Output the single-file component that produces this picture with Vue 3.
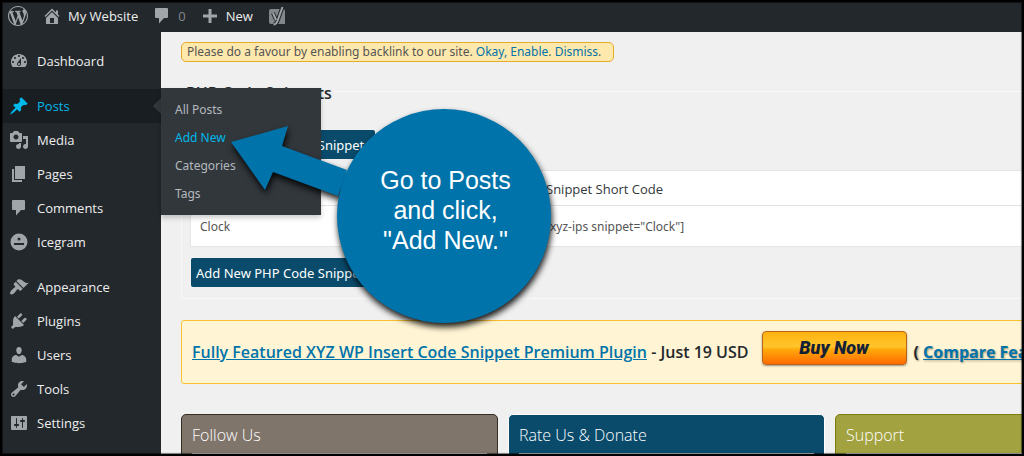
<script setup>
const paths = {
  wordpress: 'M20 10c0-5.51-4.49-10-10-10C4.48 0 0 4.49 0 10c0 5.52 4.48 10 10 10 5.51 0 10-4.48 10-10zM7.78 15.37L4.37 6.22c.55-.02 1.17-.08 1.17-.08.5-.06.44-1.13-.06-1.11 0 0-1.45.11-2.37.11-.18 0-.37 0-.58-.01C4.12 2.69 6.87 1.11 10 1.11c2.33 0 4.45.87 6.05 2.34-.68-.11-1.65.39-1.65 1.58 0 .74.45 1.36.9 2.1.35.61.55 1.36.55 2.46 0 1.49-1.4 5-1.4 5l-3.03-8.37c.54-.02.82-.17.82-.17.5-.05.44-1.25-.06-1.22 0 0-1.44.12-2.38.12-.87 0-2.33-.12-2.33-.12-.5-.03-.56 1.2-.06 1.22l.92.08 1.26 3.41zM17.41 10c.24-.64.74-1.87.43-4.25.7 1.29 1.05 2.71 1.05 4.25 0 3.29-1.73 6.24-4.4 7.78.97-2.59 1.94-5.2 2.92-7.78zM6.1 18.09C3.12 16.65 1.11 13.53 1.11 10c0-1.3.23-2.48.72-3.59C3.25 10.3 4.67 14.2 6.1 18.09zm4.03-6.63l2.58 6.98c-.86.29-1.76.45-2.71.45-.79 0-1.57-.11-2.29-.33.81-2.38 1.62-4.74 2.42-7.1z',
  home: 'M16 8.5l1.53 1.53-1.06 1.06L10 4.6l-6.47 6.49-1.06-1.06L10 2.5l4 4v-2h2v4zm-6-2.46l6 5.99V18H4v-5.97zM12 17v-5H8v5h4z',
  comments: 'M4 2h11q1 0 1 1v8q0 1-1 1h-3l-5 5.500V12H4q-1 0-1-1V3q0-1 1-1z',
  plus: 'M17 8.500v3h-5.500V17h-3v-5.500H3v-3h5.500V3h3v5.500z',
  dashboard: 'M3.76 16h12.48c1.1-1.37 1.76-3.11 1.76-5 0-4.42-3.58-8-8-8s-8 3.58-8 8c0 1.89.66 3.63 1.76 5zM10 4c.55 0 1 .45 1 1s-.45 1-1 1-1-.45-1-1 .45-1 1-1zM6 6c.55 0 1 .45 1 1s-.45 1-1 1-1-.45-1-1 .45-1 1-1zm8 0c.55 0 1 .45 1 1s-.45 1-1 1-1-.45-1-1 .45-1 1-1zm-5.37 5.55L12 7v6c0 1.1-.9 2-2 2s-2-.9-2-2c0-.57.24-1.08.63-1.45zM4 10c.55 0 1 .45 1 1s-.45 1-1 1-1-.45-1-1 .45-1 1-1zm12 0c.55 0 1 .45 1 1s-.45 1-1 1-1-.45-1-1 .45-1 1-1zm-5 3c0-.55-.45-1-1-1s-1 .45-1 1 .45 1 1 1 1-.45 1-1z',
  post: 'M10.44 3.02l1.82-1.82 6.36 6.35-1.83 1.82c-1.05-.68-2.48-.57-3.41.36l-.75.75c-.92.93-1.04 2.35-.35 3.41l-1.83 1.82-2.41-2.41-2.8 2.79c-.42.42-3.38 2.71-3.8 2.29s1.86-3.39 2.28-3.81l2.79-2.79L4.1 9.36l1.83-1.82c1.05.69 2.48.57 3.4-.36l.75-.75c.93-.92 1.05-2.35.36-3.41z',
  media: 'M13 11V4c0-.55-.45-1-1-1h-1.67L9 1H5L3.67 3H2c-.55 0-1 .45-1 1v7c0 .55.45 1 1 1h10c.55 0 1-.45 1-1zM7 4.5c1.38 0 2.5 1.12 2.5 2.5S8.38 9.5 7 9.5 4.5 8.38 4.5 7 5.62 4.5 7 4.5zM14 6h5v10.5c0 1.38-1.12 2.5-2.5 2.5S14 17.88 14 16.5s1.12-2.5 2.5-2.5c.17 0 .34.02.5.05V9h-3V6zm-4 8.05V13h2v3.5c0 1.38-1.12 2.5-2.5 2.5S7 17.88 7 16.5 8.12 14 9.5 14c.17 0 .34.02.5.05z',
  page: 'M6 15V2h10v13H6zm-1 1h8v2H3V5h2v11z',
  icegram: 'M10 1.500a8.500 8.500 0 1 0 0 17 8.500 8.500 0 0 0 0-17zM10 5.500a1.500 1.500 0 1 1 0 3 1.500 1.500 0 0 1 0-3zM5 11h10v2H5z',
  appearance: 'M14.48 11.06L7.41 3.99l1.5-1.5c.5-.56 2.3-.47 3.51.32 1.21.8 1.43 1.28 2.91 2.1 1.18.64 2.45 1.26 4.45.85zm-.71.71L6.7 4.7 4.93 6.47c-.39.39-.39 1.02 0 1.41l1.06 1.06c.39.39.39 1.03 0 1.42-.6.6-1.43 1.11-2.21 1.69-.35.26-.7.53-1.01.84C1.43 14.23.4 16.08 1.4 17.07c.99 1 2.84-.03 4.18-1.36.31-.31.58-.66.85-1.02.57-.78 1.08-1.61 1.69-2.21.39-.39 1.02-.39 1.41 0l1.06 1.06c.39.39 1.02.39 1.41 0z',
  plugins: 'M13.11 4.36L9.87 7.6 8 5.73l3.24-3.24c.35-.34 1.05-.2 1.56.32.52.51.66 1.21.31 1.55zm-8 1.77l.91-1.12 9.01 9.01-1.19.84c-.71.71-2.63 1.16-3.82 1.16H6.14L4.9 17.26c-.59.59-1.54.59-2.12 0-.59-.58-.59-1.53 0-2.12l1.24-1.24v-3.88c0-1.13.4-3.19 1.09-3.89zm7.26 3.97l3.24-3.24c.34-.35 1.04-.21 1.55.31.52.51.66 1.21.31 1.55l-3.24 3.25z',
  users: 'M10 9.25c-2.27 0-2.73-3.44-2.73-3.44C7 4.02 7.82 2 9.97 2c2.16 0 2.98 2.02 2.71 3.81 0 0-.41 3.44-2.68 3.44zm0 2.57L12.72 10c2.39 0 4.52 2.33 4.52 4.53v2.49s-3.65 1.13-7.24 1.13c-3.65 0-7.24-1.13-7.24-1.13v-2.49c0-2.25 1.94-4.48 4.47-4.48z',
  tools: 'M16.68 9.77c-1.34 1.34-3.3 1.67-4.95.99l-5.41 6.52c-.99.99-2.59.99-3.58 0s-.99-2.59 0-3.57l6.52-5.42c-.68-1.65-.35-3.61.99-4.95 1.28-1.28 3.12-1.62 4.72-1.06l-2.89 2.89 2.82 2.82 2.86-2.87c.53 1.58.18 3.39-1.08 4.65zM3.81 16.21c.4.39 1.04.39 1.43 0 .4-.4.4-1.04 0-1.43-.39-.4-1.03-.4-1.43 0-.39.39-.39 1.03 0 1.43z',
  settings: 'M18 16V4c0-.55-.45-1-1-1H3c-.55 0-1 .45-1 1v12c0 .55.45 1 1 1h14c.55 0 1-.45 1-1zM8 11h1c.55 0 1 .45 1 1s-.45 1-1 1H8v1.5c0 .28-.22.5-.5.5s-.5-.22-.5-.5V13H6c-.55 0-1-.45-1-1s.45-1 1-1h1V5.5c0-.28.22-.5.5-.5s.5.22.5.5V11zm5-2h-1c-.55 0-1-.45-1-1s.45-1 1-1h1V5.5c0-.28.22-.5.5-.5s.5.22.5.5V7h1c.55 0 1 .45 1 1s-.45 1-1 1h-1v5.5c0 .28-.22.5-.5.5s-.5-.22-.5-.5V9z',
}

const menu = [
  { label: 'Dashboard', icon: 'dashboard' },
  { label: 'Posts', icon: 'post', gap: true, children: ['All Posts', 'Add New', 'Categories', 'Tags'] },
  { label: 'Media', icon: 'media' },
  { label: 'Pages', icon: 'page' },
  { label: 'Comments', icon: 'comments' },
  { label: 'Icegram', icon: 'icegram' },
  { label: 'Appearance', icon: 'appearance', gap: true },
  { label: 'Plugins', icon: 'plugins' },
  { label: 'Users', icon: 'users' },
  { label: 'Tools', icon: 'tools' },
  { label: 'Settings', icon: 'settings' },
]

const cards = [
  { title: 'Follow Us', tone: 'brown' },
  { title: 'Rate Us & Donate', tone: 'blue' },
  { title: 'Support', tone: 'olive' },
]
</script>

<template>
  <div class="page">
    <header class="bar">
      <a href="#" class="bar-item logo" aria-label="WordPress">
        <svg class="icon" viewBox="0 0 20 20"><path :d="paths.wordpress" /></svg>
      </a>
      <a href="#" class="bar-item">
        <svg class="icon" viewBox="0 0 20 20"><path :d="paths.home" /></svg>My Website
      </a>
      <a href="#" class="bar-item muted">
        <svg class="icon" viewBox="0 0 20 20"><path :d="paths.comments" /></svg>0
      </a>
      <a href="#" class="bar-item">
        <svg class="icon" viewBox="0 0 20 20"><path :d="paths.plus" /></svg>New
      </a>
      <a href="#" class="bar-item" aria-label="SEO">
        <svg class="icon" viewBox="0 0 20 20">
          <path class="seo-tile" d="M4 3h12a2 2 0 0 1 2 2v13H4a2 2 0 0 1-2-2V5a2 2 0 0 1 2-2z" />
          <path class="seo-edge" d="M6 7l3 7M15.500 1l-5 14q-1.200 3.500-4 3.500" />
          <path class="seo-mark" d="M6 7l3 7M15.500 1l-5 14q-1.200 3.500-4 3.500" />
        </svg>
      </a>
    </header>

    <div class="body">
      <nav class="side">
        <ul class="menu">
          <li
            v-for="item in menu"
            :key="item.label"
            class="menu-item"
            :class="{ gap: item.gap, open: item.children }"
          >
            <a href="#" class="menu-link">
              <svg class="icon" viewBox="0 0 20 20"><path fill-rule="evenodd" :d="paths[item.icon]" /></svg>
              {{ item.label }}
            </a>
            <ul v-if="item.children" class="submenu">
              <li v-for="child in item.children" :key="child">
                <a href="#" class="sub-link" :class="{ active: child === 'Add New' }">{{ child }}</a>
              </li>
            </ul>
          </li>
        </ul>
      </nav>

      <main class="content">
        <p class="notice">
          Please do a favour by enabling backlink to our site. <a href="#">Okay, Enable</a>. <a href="#">Dismiss</a>.
        </p>

        <fieldset class="snippets">
          <legend>PHP Code Snippets</legend>
          <button type="button" class="add">Add New PHP Code Snippet</button>
          <table class="list">
            <thead>
              <tr><th class="name">Name</th><th>Snippet Short Code</th></tr>
            </thead>
            <tbody>
              <tr><td>Clock</td><td>[xyz-ips snippet="Clock"]</td></tr>
            </tbody>
          </table>
          <button type="button" class="add">Add New PHP Code Snippet</button>
        </fieldset>

        <section class="promo">
          <span><a href="#">Fully Featured XYZ WP Insert Code Snippet Premium Plugin</a> - Just 19 USD</span>
          <button type="button" class="buy">Buy Now</button>
          <span class="compare">( <a href="#">Compare Features</a> )</span>
        </section>

        <div class="cards">
          <section v-for="card in cards" :key="card.title" class="card" :class="card.tone">
            <h2>{{ card.title }}</h2>
          </section>
        </div>
      </main>
    </div>

    <div class="callout">
      <svg class="callout-shape" viewBox="0 0 340 220">
        <path d="M11 34L68 18L62 38L127 62L118 88L53 64L45 82Z" />
        <circle cx="224" cy="108" r="107" />
      </svg>
      <p class="callout-text">Go to Posts<br />and click,<br />"Add New."</p>
    </div>
    <div class="frame"></div>
  </div>
</template>

<style>
body {
  margin: 0;
  background: #f0f0f0;
}
</style>

<style scoped>
.page {
  position: relative;
  display: flex;
  flex-direction: column;
  height: 100vh;
  overflow: hidden;
  background: #f0f0f0;
  color: #444;
  font: 13px/20px "Open Sans", "Noto Sans", sans-serif;
}
a { color: #0073aa; }
ul { list-style: none; margin: 0; padding: 0; }
.icon { flex: none; width: 20px; height: 20px; fill: #a0a5aa; }

.bar {
  flex: none;
  display: flex;
  align-items: center;
  gap: 14px;
  height: 32px;
  padding-left: 8px;
  background: #23282d;
}
.bar-item {
  display: flex;
  align-items: center;
  gap: 6px;
  color: #eee;
  text-decoration: none;
}
.muted { color: #83878b; }
.seo-tile { fill: #82878c; }
.seo-edge { fill: none; stroke: #23282d; stroke-width: 4; }
.seo-mark { fill: none; stroke: #a0a5aa; stroke-width: 2; }

.body { flex: 1; display: flex; min-height: 0; }
.side { flex: none; width: 161px; padding-top: 12px; box-sizing: border-box; background: #23282d; }
.menu-item { position: relative; }
.gap { margin-top: 11px; }
.menu-link {
  display: flex;
  align-items: center;
  gap: 8px;
  height: 34px;
  padding-left: 9px;
  color: #eee;
  text-decoration: none;
}
.open > .menu-link { background: #191e23; color: #00b9eb; }
.open > .menu-link .icon { fill: #00b9eb; }
.open > .menu-link::after {
  content: "";
  position: absolute;
  right: 0;
  top: 9px;
  border: 8px solid transparent;
  border-left: 0;
  border-right-color: #32373c;
}
.submenu {
  position: absolute;
  z-index: 2;
  top: -1px;
  left: 100%;
  width: 160px;
  padding: 8px 0 7px;
  box-sizing: border-box;
  background: #32373c;
  box-shadow: 0 3px 5px rgba(0, 0, 0, 0.2);
}
.sub-link {
  display: block;
  padding: 4px 14px;
  color: #b4b9be;
  font-family: "Noto Sans", sans-serif;
  font-size: 12px;
  text-decoration: none;
}
.sub-link.active { color: #00b9eb; }

.content { flex: 1; min-width: 0; margin-right: -128px; padding: 10px 0 0 20px; }
.notice {
  width: fit-content;
  margin: 0;
  padding: 0 12px 0 5px;
  border: 1px solid #e3ab27;
  border-radius: 5px;
  background: #ffe8ac;
  font-family: "Noto Sans", sans-serif;
  font-size: 12px;
  line-height: 18px;
  color: #555;
}
.notice a { text-decoration: none; }
.snippets {
  margin: 18px 0 0;
  padding: 27px 8px 11px;
  border: 1px solid #f8f8f8;
}
legend { margin-left: -6px; padding: 3px 2px 0; font-size: 16px; font-weight: 600; color: #23282d; }
.add {
  display: block;
  min-width: 184px;
  height: 29px;
  margin-left: 1px;
  padding: 0 5px;
  border: 0;
  border-radius: 2px;
  background: #0a4b6b;
  color: #fff;
  font: 13px/20px "Noto Sans", sans-serif;
  text-align: left;
}
.list {
  width: 100%;
  margin: 11px 0;
  border: 1px solid #e5e5e5;
  border-spacing: 0;
  background: #fff;
  color: #555;
}
.list th { padding: 8px 9px 6px; border-bottom: 1px solid #e1e1e1; font-weight: 400; text-align: left; color: #32373c; }
.list td { padding: 11px 9px 9px; font-family: "Noto Sans", sans-serif; font-size: 12px; }
.name { width: 328px; }

.promo {
  display: flex;
  align-items: center;
  gap: 7px;
  height: 62px;
  margin-top: 21px;
  padding-left: 10px;
  border: 1px solid #fcc22d;
  border-radius: 3px;
  background: #fff4d3;
  color: #23282d;
  font-size: 16px;
  font-weight: 600;
  white-space: nowrap;
}
.buy {
  width: 145px;
  height: 34px;
  margin: 0 0 8px 6px;
  padding: 0;
  border: 1px solid #b8641c;
  border-radius: 4px;
  background: linear-gradient(#ffb20f, #ffc52d 45%, #ffa90a 55%, #ff6a00);
  box-shadow: 0 1px 2px rgba(0, 0, 0, 0.4);
  color: #142036;
  font: italic 900 18px/30px "Roboto", "Liberation Sans", sans-serif;
}
.compare { font-weight: 700; text-shadow: 1px 1px 2px rgba(0, 0, 0, 0.4); }

.cards {
  display: grid;
  grid-template-columns: repeat(3, 1fr);
  gap: 10px;
  margin-top: 30px;
}
.card {
  min-height: 180px;
  padding: 8px 10px;
  border: 1px solid;
  border-radius: 5px;
  color: #fff;
}
.card h2 {
  margin: 0;
  padding-bottom: 6px;
  border-bottom: 1px solid #fff;
  font-size: 16px;
  line-height: 24px;
  font-weight: 300;
}
.brown { background: #80756b; border-color: #352c24; }
.blue { background: #0a4b6b; border-color: #fff; }
.olive { background: #a2a340; border-color: #7b7d0b; }

.callout { position: absolute; z-index: 3; top: 108px; left: 220px; width: 340px; height: 220px; }
.callout-shape {
  display: block;
  overflow: visible;
  fill: #0073aa;
  filter: drop-shadow(1px 4px 3px rgba(0, 0, 0, 0.9));
}
.callout-text {
  position: absolute;
  inset: 57px 2px auto 113px;
  margin: 0;
  color: #fff;
  font: 25px/30px "Liberation Sans", Arial, sans-serif;
  text-align: center;
}
.frame {
  position: absolute;
  z-index: 4;
  inset: 0;
  border: 2px solid #000;
  box-shadow: inset 0 0 1px 1px rgba(0, 0, 0, 0.5);
  pointer-events: none;
}
</style>
